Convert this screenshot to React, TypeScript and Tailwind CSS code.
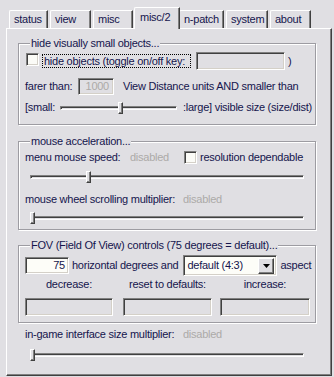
import React from "react";

const tabs = ["status", "view", "misc", "misc/2", "n-patch", "system", "about"];
const tabW: Record<string, string> = {
  status: "w-[39px]",
  view: "w-[41px]",
  misc: "w-[40px]",
  "misc/2": "w-[46px]",
  "n-patch": "w-[45px]",
  system: "w-[42px]",
  about: "w-[41px]",
};

function Check() {
  return (
    <span className="inline-block shrink-0 w-[13px] h-[13px] bg-[#fbfbf7] border border-t-[#808080] border-l-[#808080] border-r-white border-b-white shadow-[inset_1px_1px_0_#404040,inset_-1px_-1px_0_#d4d0c8]" />
  );
}

function Slider({ w, left }: { w: string; left: string }) {
  return (
    <div className={`relative h-[12px] shrink-0 ${w}`}>
      <div className="absolute left-0 right-0 top-[4px] h-[4px] border border-t-[#808080] border-l-[#808080] border-r-white border-b-white shadow-[inset_1px_1px_0_#404040]" />
      <div
        className={`absolute top-0 w-[5px] h-[12px] bg-[#e0dfe3] border border-t-white border-l-white border-r-[#404040] border-b-[#404040] shadow-[inset_-1px_-1px_0_#808080] ${left}`}
      />
    </div>
  );
}

function Sunken({ className = "", children }: { className?: string; children?: React.ReactNode }) {
  return (
    <div
      className={`shrink-0 border border-t-[#808080] border-l-[#808080] border-r-white border-b-white shadow-[inset_1px_1px_0_#404040,inset_-1px_-1px_0_#d4d0c8] ${className}`}
    >
      {children}
    </div>
  );
}

function Group({ title, className = "", children }: { title: string; className?: string; children: React.ReactNode }) {
  return (
    <fieldset
      className={`w-[298px] border border-[#9d9ca2] shadow-[1px_1px_0_#fff,inset_1px_1px_0_#fff] pl-[6px] ${className}`}
    >
      <legend className="ml-[5px] px-[1px] leading-[13px] bg-[#e0dfe3]">{title}</legend>
      {children}
    </fieldset>
  );
}

export default function App() {
  return (
    <div
      className="w-[334px] h-[377px] bg-[#e0dfe3] text-[11px] leading-[13px] tracking-[-0.25px] text-[#15154d] overflow-hidden"
      style={{ fontFamily: '"Liberation Sans", Arial, sans-serif' }}
    >
      {/* tab strip */}
      <div className="h-[28px] flex items-end pl-[9px]">
        {tabs.map((t) => {
          const active = t === "misc/2";
          return (
            <div
              key={t}
              className={
                active
                  ? `relative z-10 -mb-[1px] -mx-[1px] h-[22px] ${tabW[t]} bg-[#e0dfe3] border-l border-t border-white border-r border-r-[#404040] shadow-[inset_-1px_0_0_#808080] rounded-tl-[2px] flex items-start pt-[3px] pl-[5px]`
                  : `h-[18px] ${tabW[t]} mr-[2px] border-l border-t border-white border-r border-r-[#404040] shadow-[inset_-1px_0_0_#808080] rounded-tl-[2px] flex items-center pl-[4px]`
              }
            >
              {t}
            </div>
          );
        })}
      </div>

      {/* page */}
      <div className="ml-[6px] w-[326px] h-[348px] border border-t-white border-l-white border-r-[#404040] border-b-[#404040] shadow-[inset_-1px_-1px_0_#808080] pl-[11px] pt-[8px]">
        <Group title="hide visually small objects..." className="pb-[10px]">
          <div className="mt-[2px] h-[18px] flex items-center">
            <span className="ml-[1px]">
              <Check />
            </span>
            <span className="ml-[3px] w-[149px] h-[14px] border border-dotted border-black pl-[1px] flex items-center whitespace-nowrap">
              hide objects (toggle on/off key:
            </span>
            <Sunken className="ml-[5px] w-[89px] h-[18px]" />
            <span className="ml-[3px]">)</span>
          </div>
          <div className="mt-[8px] h-[17px] flex items-center">
            <span className="w-[53px]">farer than:</span>
            <Sunken className="w-[36px] h-[17px] flex items-center justify-end pr-[4px] text-[#acaaa8]">1000</Sunken>
            <span className="ml-[9px] whitespace-nowrap">View Distance units AND smaller than</span>
          </div>
          <div className="mt-[6px] h-[13px] flex items-center whitespace-nowrap">
            <span className="w-[35px]">[small:</span>
            <Slider w="w-[117px]" left="left-[58px]" />
            <span className="ml-[6px]">:large] visible size (size/dist)</span>
          </div>
        </Group>

        <Group title="mouse acceleration..." className="mt-[10px] pb-[5px]">
          <div className="mt-[2px] h-[14px] flex items-center whitespace-nowrap">
            <span className="w-[105px]">menu mouse speed:</span>
            <span className="w-[54px] text-[#acaaa8]">disabled</span>
            <Check />
            <span className="ml-[3px]">resolution dependable</span>
          </div>
          <div className="mt-[7px] ml-[5px]">
            <Slider w="w-[274px]" left="left-[56px]" />
          </div>
          <div className="mt-[9px] h-[14px] flex items-center whitespace-nowrap">
            <span className="w-[158px]">mouse wheel scrolling multiplier:</span>
            <span className="text-[#acaaa8]">disabled</span>
          </div>
          <div className="mt-[6px] ml-[5px]">
            <Slider w="w-[274px]" left="left-[0px]" />
          </div>
        </Group>

        <Group title="FOV (Field Of View) controls (75 degrees = default)..." className="mt-[9px] pb-[6px]">
          <div className="mt-[3px] h-[21px] flex items-center whitespace-nowrap">
            <Sunken className="w-[44px] h-[17px] bg-[#fdfdf8] flex items-center justify-end pr-[3px]">75</Sunken>
            <span className="ml-[3px]">horizontal degrees and</span>
            <Sunken className="ml-[5px] w-[94px] h-[21px] bg-[#fdfdf8] flex items-center pl-[3px] pr-[2px]">
              <span className="flex-1">default (4:3)</span>
              <span className="w-[16px] h-[16px] bg-[#e0dfe3] border border-t-white border-l-white border-r-[#404040] border-b-[#404040] shadow-[inset_-1px_-1px_0_#808080] flex items-center justify-center">
                <svg width="7" height="4" viewBox="0 0 7 4">
                  <path d="M0 0h7L3.5 4z" fill="#000" />
                </svg>
              </span>
            </Sunken>
            <span className="ml-[3px]">aspect</span>
          </div>
          <div className="mt-[2px] h-[13px] flex">
            <span className="w-[88px] text-center">decrease:</span>
            <span className="ml-[10px] w-[89px] text-center">reset to defaults:</span>
            <span className="ml-[8px] w-[90px] text-center">increase:</span>
          </div>
          <div className="mt-[7px] flex">
            <Sunken className="w-[88px] h-[18px]" />
            <Sunken className="ml-[10px] w-[89px] h-[18px]" />
            <Sunken className="ml-[8px] w-[90px] h-[18px]" />
          </div>
        </Group>

        <div className="mt-[4px] pl-[7px] h-[14px] flex items-center whitespace-nowrap">
          <span className="w-[158px]">in-game interface size multiplier:</span>
          <span className="text-[#acaaa8]">disabled</span>
        </div>
        <div className="mt-[8px] ml-[12px]">
          <Slider w="w-[274px]" left="left-[0px]" />
        </div>
      </div>
    </div>
  );
}
